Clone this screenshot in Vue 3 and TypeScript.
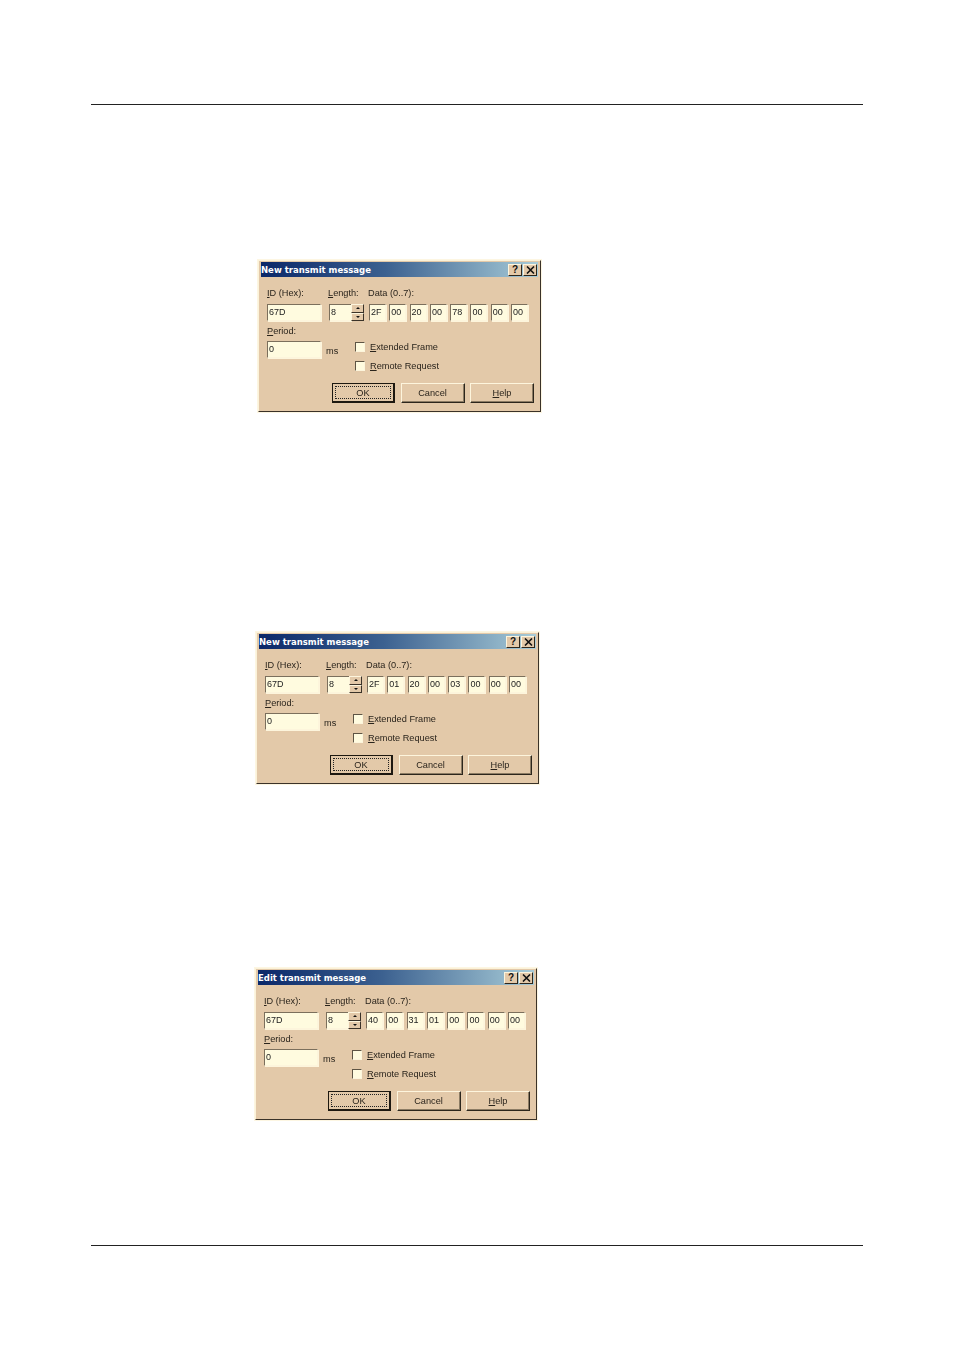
<script setup lang="ts">
interface Dialog {
  cls: string
  title: string
  data: string[]
}
const dialogs: Dialog[] = [
  { cls: 'd1', title: 'New transmit message', data: ['2F', '00', '20', '00', '78', '00', '00', '00'] },
  { cls: 'd2', title: 'New transmit message', data: ['2F', '01', '20', '00', '03', '00', '00', '00'] },
  { cls: 'd3', title: 'Edit transmit message', data: ['40', '00', '31', '01', '00', '00', '00', '00'] },
]
</script>

<template>
  <div class="page">
    <div class="rule"></div>
    <section v-for="d in dialogs" :key="d.cls" class="dialog" :class="d.cls">
      <header class="titlebar">
        <span class="title">{{ d.title }}</span>
        <span class="tbtn help-btn">?</span>
        <span class="tbtn close-btn">
          <svg width="9" height="8" viewBox="0 0 9 8"><path d="M1 0.5L8 7.5M8 0.5L1 7.5" stroke="#111" stroke-width="1.6" fill="none" /></svg>
        </span>
      </header>
      <div class="labels">
        <span class="lab lab-id"><u>I</u>D (Hex):</span>
        <span class="lab lab-len"><u>L</u>ength:</span>
        <span class="lab">Data (0..7):</span>
      </div>
      <div class="fields">
        <div class="field f-id">67D</div>
        <div class="field f-len">8</div>
        <div class="spin">
          <span class="spin-b"><i class="up"></i></span>
          <span class="spin-b"><i class="down"></i></span>
        </div>
        <div class="data">
          <div v-for="(v, i) in d.data" :key="i" class="field f-data">{{ v }}</div>
        </div>
      </div>
      <div class="lab period-label"><u>P</u>eriod:</div>
      <div class="period-row">
        <div class="field f-id">0</div>
        <span class="lab ms">ms</span>
        <div class="checks">
          <label class="check"><span class="box"></span><span class="lab"><u>E</u>xtended Frame</span></label>
          <label class="check"><span class="box"></span><span class="lab"><u>R</u>emote Request</span></label>
        </div>
      </div>
      <div class="buttons">
        <div class="btn default"><span class="focus">OK</span></div>
        <div class="btn">Cancel</div>
        <div class="btn"><span><u>H</u>elp</span></div>
      </div>
    </section>
    <div class="rule bottom"></div>
  </div>
</template>

<style>
html, body { background: #fff; }
</style>

<style scoped>
.page {
  width: 954px;
  height: 1350px;
  box-sizing: border-box;
  padding: 104px 91px 0;
  background: #fff;
  overflow: hidden;
  font-family: "Liberation Sans", Arial, sans-serif;
  font-size: 9.2px;
  color: #2a241c;
}
.rule { height: 1px; background: #222; }
.rule.bottom { margin-top: 125px; }
.dialog {
  box-sizing: border-box;
  width: 283px;
  height: 152px;
  padding: 1px 2px;
  background: #e3c9a9;
  border: 1px solid;
  border-color: #fbf2d9 #3a3228 #3a3228 #fbf2d9;
  outline: 1px solid #fdf6e2;
  filter: blur(0.3px);
}
.d1 { margin: 155px 0 0 167px; }
.d2 { margin: 220px 0 0 165px; }
.d3 { margin: 184px 0 0 164px; width: 282px; }
.titlebar {
  height: 15px;
  display: flex;
  align-items: center;
  padding: 0 1px 0 0;
  background: linear-gradient(90deg, #0a2768 0%, #3c6190 45%, #a8ccd8 100%);
}
.title {
  flex: 1;
  font-family: "DejaVu Sans", sans-serif;
  font-weight: bold;
  font-size: 8.5px;
  color: #fff;
  white-space: nowrap;
}
.tbtn {
  box-sizing: border-box;
  width: 14px;
  height: 12px;
  display: flex;
  align-items: center;
  justify-content: center;
  background: #e3c9a9;
  border: 1px solid;
  border-color: #fdf5dd #2c261c #2c261c #fdf5dd;
  font-weight: bold;
  font-size: 10px;
  line-height: 1;
  color: #111;
}
.help-btn { margin-right: 1px; }
.labels {
  display: flex;
  height: 12px;
  margin-top: 10px;
  padding-left: 6px;
  align-items: center;
}
.lab { white-space: nowrap; line-height: 12px; }
.lab-id { width: 61px; }
.lab-len { width: 40px; }
.fields {
  display: flex;
  height: 17px;
  margin-top: 5px;
  padding-left: 6px;
}
.field {
  box-sizing: border-box;
  height: 17px;
  padding-left: 1px;
  line-height: 14px;
  background: #fffbdf;
  border: 1px solid;
  border-color: #7b6f5c #fdf5dc #fdf5dc #7b6f5c;
  box-shadow: 1px 1px 0 #fdf5dc;
  font-size: 9px;
  color: #222;
}
.f-id { width: 54px; }
.f-len { width: 22px; margin-left: 8px; border-right: 0; }
.spin {
  display: flex;
  flex-direction: column;
  width: 13px;
}
.spin-b {
  box-sizing: border-box;
  height: 9px;
  display: flex;
  align-items: center;
  justify-content: center;
  background: #e3c9a9;
  border: 1px solid;
  border-color: #fdf5dd #3a3228 #3a3228 #fdf5dd;
}
.spin-b i { display: block; width: 0; height: 0; border: 2px solid transparent; }
.spin-b .up { border-top: 0; border-bottom-color: #111; }
.spin-b .down { border-bottom: 0; border-top-color: #111; }
.data {
  display: flex;
  gap: 3.3px;
  margin-left: 5px;
}
.f-data { width: 17px; }
.period-label { height: 12px; margin-top: 4px; padding-left: 6px; }
.period-row {
  display: flex;
  height: 30px;
  margin-top: 4px;
  padding-left: 6px;
}
.ms { width: 29px; margin: 4px 0 0 5px; }
.checks {
  display: flex;
  flex-direction: column;
  gap: 9px;
  padding-top: 1px;
}
.check { display: flex; align-items: center; height: 10px; gap: 5px; }
.box {
  box-sizing: border-box;
  width: 10px;
  height: 10px;
  background: #fffbdf;
  border: 1px solid;
  border-color: #5e5444 #fdf5dc #fdf5dc #5e5444;
}
.buttons {
  display: flex;
  justify-content: flex-end;
  gap: 5.5px;
  margin-top: 12px;
  padding-right: 4px;
}
.btn {
  box-sizing: border-box;
  width: 64px;
  height: 20px;
  display: flex;
  align-items: center;
  justify-content: center;
  background: #e3c9a9;
  border: 1px solid;
  border-color: #fdf5dd #2c261c #2c261c #fdf5dd;
  box-shadow: inset -1px -1px 0 #8c7c64;
}
.btn.default {
  width: 63px;
  border: 1px solid #1d1810;
  box-shadow: inset -1px -1px 0 #1d1810;
  padding: 2px 3px 3px 2px;
}
.focus {
  box-sizing: border-box;
  flex: 1;
  height: 100%;
  display: flex;
  align-items: center;
  justify-content: center;
  border: 1px dotted #222;
}
</style>
